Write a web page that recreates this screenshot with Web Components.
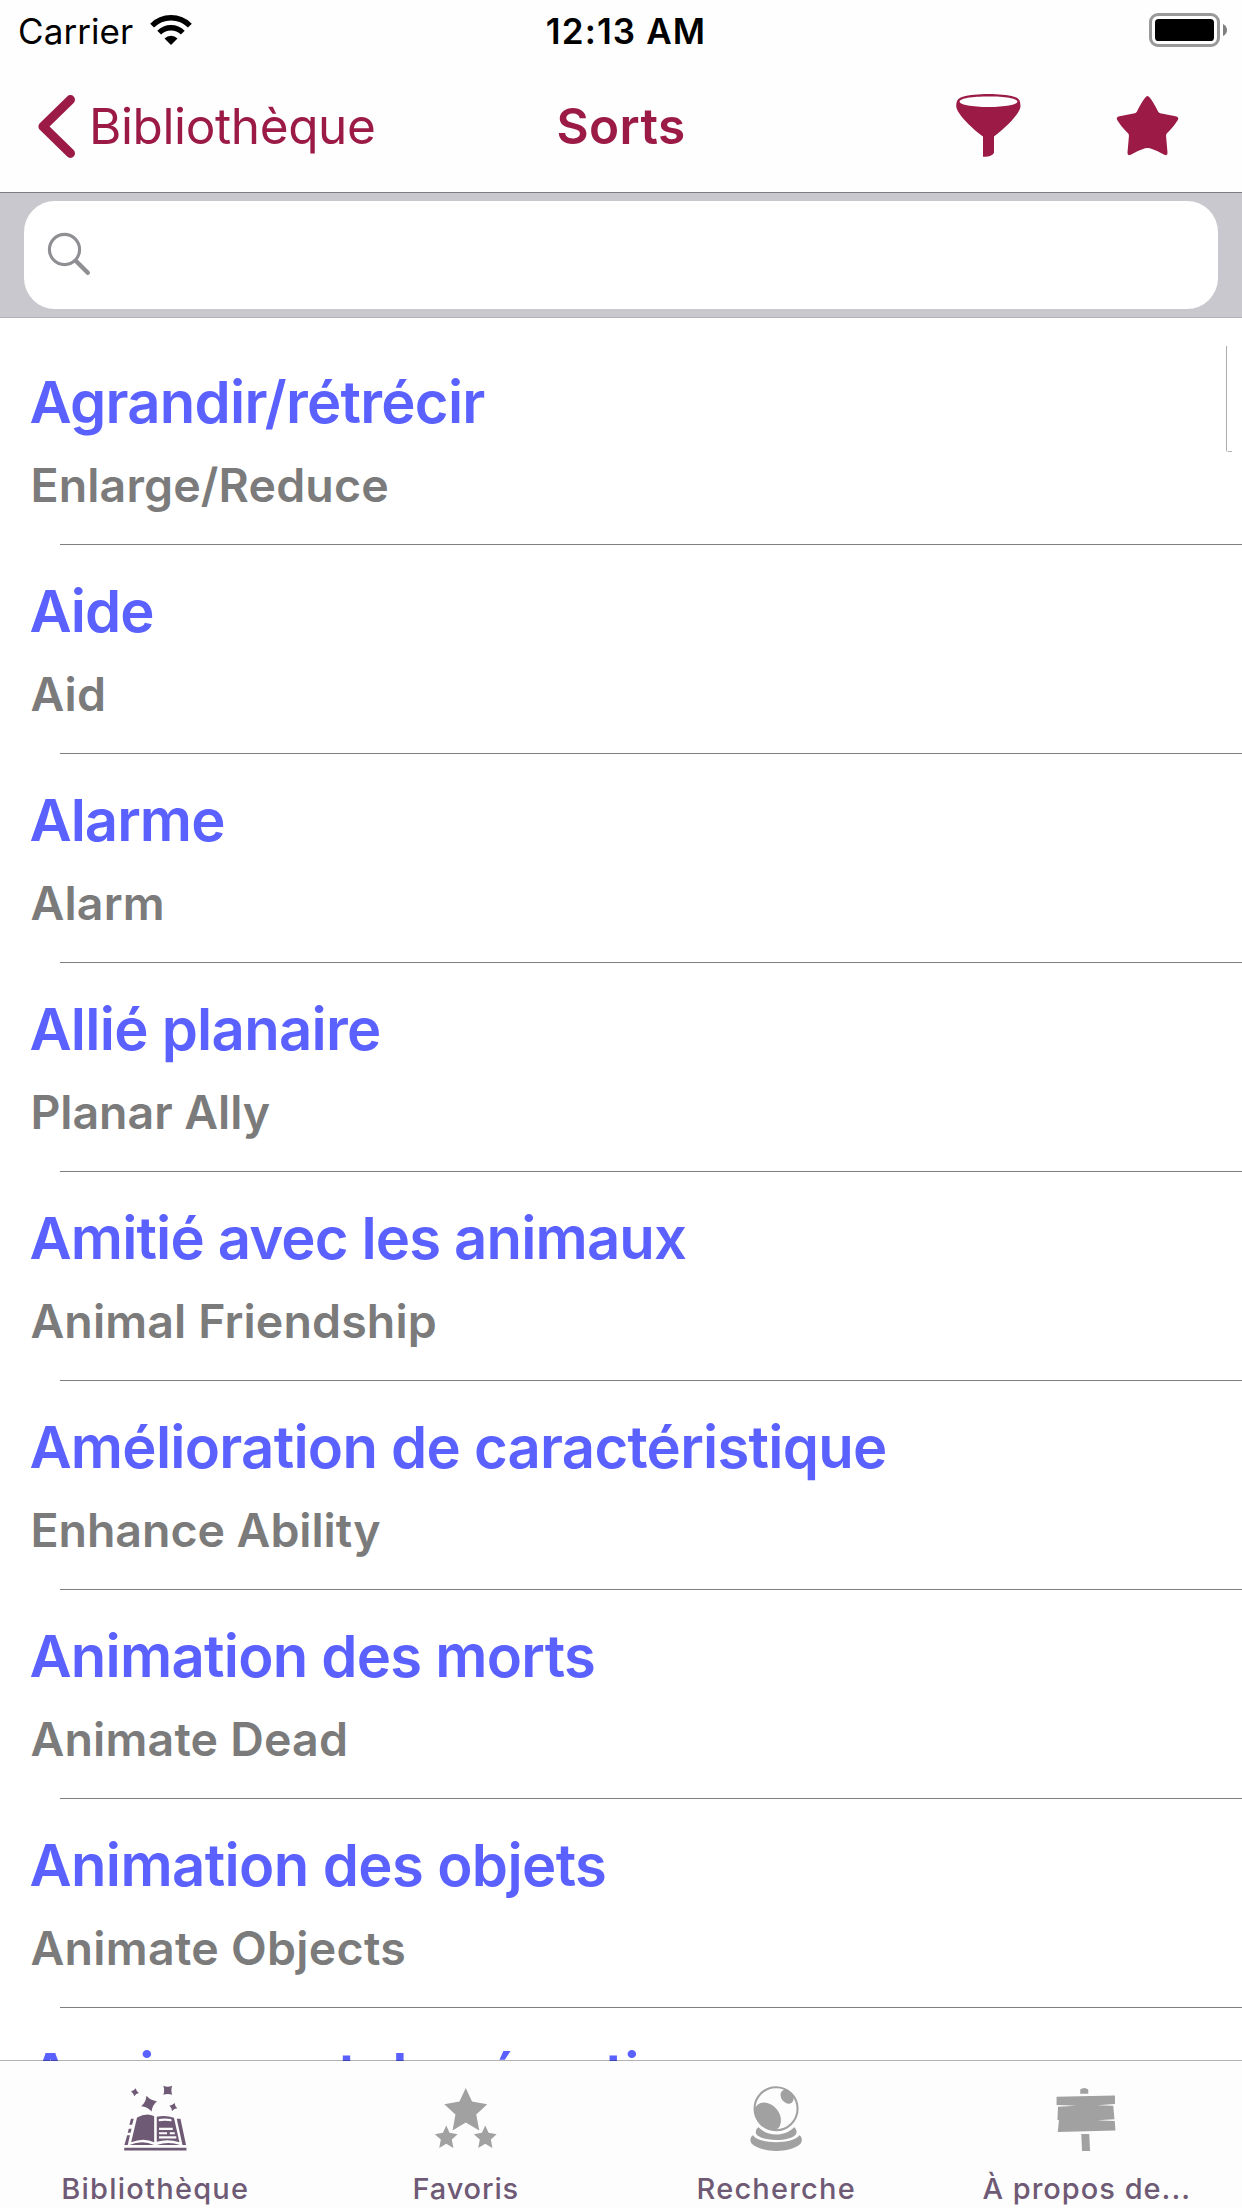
<!DOCTYPE html>
<html lang="fr">
<head>
<meta charset="utf-8">
<title>Sorts</title>
<style>
html,body{margin:0;padding:0}
body{width:1242px;height:2208px;overflow:hidden;background:#fff;font-family:Inter,"Liberation Sans",sans-serif}
</style>
</head>
<body>
<spell-app></spell-app>
<script>
function define(name, html, setup) {
  const tpl = document.createElement('template');
  tpl.innerHTML = html;
  customElements.define(name, class extends HTMLElement {
    constructor() {
      super();
      this.attachShadow({ mode: 'open' }).appendChild(tpl.content.cloneNode(true));
    }
    connectedCallback() { if (setup) setup(this, this.shadowRoot); }
  });
}

const STAR = 'M465.5 2088 471.8 2101.6 487 2104.3 476 2114.6 479 2130.5 465.5 2122.6 452.3 2130.5 455.2 2114.6 444 2104.3 459.2 2101.6Z';
const SPARK = 'M0-1Q.28-.3 1 0 .3.28 0 1-.28.3-1 0-.3-.28 0-1Z';

const ICONS = {
  wifi: ['149 13 44 34', `<g fill="none" stroke="currentColor" stroke-width="5.4"><path d="M152.1 25.6A26.7 26.7 0 0 1 189.9 25.6M159.2 32.7A16.7 16.7 0 0 1 182.8 32.7"/></g><path fill="currentColor" d="M171 44.9 164.5 38.4A9.2 9.2 0 0 1 177.5 38.4Z"/>`],
  battery: ['1147 11 82 38', `<rect x="1150.5" y="14.5" width="68" height="31" rx="7.5" fill="none" stroke="#999" stroke-width="3"/><rect x="1155" y="19" width="59" height="22" rx="3.6"/><path fill="#808080" d="M1223 24Q1227 26 1227 30T1223 36Z"/>`],
  back: ['36 92 42 68', `<path fill="none" stroke="currentColor" stroke-width="9.2" stroke-linecap="round" stroke-linejoin="round" d="M70.4 99.7 43 126.5 70.4 153.3"/>`],
  funnel: ['954 90 70 70', `<path fill="currentColor" fill-rule="evenodd" d="M956.2 106C956.5 100 958 98.3 963 96.8 975 93.2 1002 93.2 1014 96.8 1019 98.3 1020.3 100 1020.5 106 1020.5 112.5 1008 126 994 136.6V152.5C993 155.5 989 156.8 983 156.7V136.6C969 126 956.2 112.500 956.2 106ZM959.6 101.600C959.6 104.8 972 107.1 988.500 107.1S1017.4 104.800 1017.4 101.600 1005 96.500 988.500 96.500 959.600 98.400 959.6 101.600Z"/>`],
  star: ['1113 90 70 70', `<path fill="currentColor" d="M1145.3 97.5Q1147.500 94.500 1149.700 97.500C1152.500 101 1155 105.500 1157.800 111 1158.500 112.700 1159.500 113.200 1161.500 113.600L1175.500 116.200Q1179.500 117.200 1177.800 120C1175 124.500 1172 128.500 1167 133.200 1166.100 134.200 1166 135 1166.100 136.500L1167.500 152.500Q1167.700 156.200 1164.300 154.700 1158 151 1150 148.300 1147.500 147.500 1145 148.300 1137 151 1130.700 154.700 1127.300 156.200 1127.500 152.500L1128.900 136.500C1129 135 1128.900 134.200 1128 133.200 1123 128.500 1120 124.500 1117.200 120Q1115.500 117.200 1119.500 116.200L1133.500 113.600C1135.500 113.200 1136.500 112.700 1137.200 111 1140 105.500 1142.500 101 1145.300 97.500Z"/>`],
  search: ['44 229 50 50', `<g fill="none" stroke="currentColor"><circle cx="64.5" cy="249.500" r="15.100" stroke-width="3.100"/><path stroke-width="4.400" stroke-linecap="round" d="M76 261 87.800 272.800"/></g>`],
  book: ['118.25 2082 74 74', `<g fill="currentColor">
    <path transform="translate(135.200 2092.200) rotate(10) scale(4)" d="${SPARK}"/>
    <path transform="translate(149.300 2103.700) rotate(-18) scale(8.300)" d="${SPARK}"/>
    <path transform="translate(168 2090.300) rotate(45) scale(6.400)" d="${SPARK}"/>
    <path transform="translate(173.600 2107) rotate(18) scale(4.100)" d="${SPARK}"/>
    <path d="M124.500 2147.800H186.700V2150.600H124.500ZM137.300 2117.600Q147 2112 154.400 2116.200V2142.300Q144 2137 131.400 2142.300ZM157 2116.700Q166 2114.700 174.200 2117.700L179.700 2142.300Q168 2138.300 157 2141.800ZM129.500 2145Q143 2139.500 154.300 2145ZM157 2145Q169 2140.800 180.300 2145ZM131.200 2118.800H134L132.400 2124.700H129.600ZM129 2128.800H131.800L130.800 2132.700H128ZM127.400 2135.300H130.200L128 2145H124.700ZM177 2118.800H180.700L186.300 2145H182.700Z"/></g>
    <path fill="#fdfdfd" d="M159 2119Q165 2117.800 171.300 2119L172 2121.200Q165 2120.200 159 2121.200ZM159.300 2127.800H173V2130H159.300ZM159.300 2132.200H167.300V2134.300H159.300ZM170 2132.200H175V2134.300H170ZM159.300 2136.300H176.500V2138.600H159.300Z"/>`],
  stars: ['428.75 2082 74 74', `<path fill="currentColor" d="${STAR}"/><g fill="currentColor" stroke="#fdfdfd" stroke-width="2" paint-order="stroke"><path transform="translate(446 2125.500) scale(.53) translate(-465.500 -2088)" d="${STAR}"/><path transform="translate(485 2125.500) scale(.53) translate(-465.500 -2088)" d="${STAR}"/></g>`],
  orb: ['739.25 2082 74 74', `<defs><clipPath id="c"><circle cx="776.300" cy="2108.700" r="22"/></clipPath></defs><circle cx="776.300" cy="2108.700" r="21.500" fill="none" stroke="currentColor" stroke-width="2.100"/><g fill="currentColor"><g clip-path="url(#c)"><ellipse cx="767.500" cy="2117" rx="12.300" ry="15.700" transform="rotate(-38 767.500 2117)"/><ellipse cx="787.300" cy="2096.800" rx="5.800" ry="7.600" transform="rotate(-38 787.300 2096.800)"/></g><path d="M758.800 2127.300C768 2137 785 2137 794.300 2127.300 796.500 2128.500 797.300 2131.500 796.400 2134 791 2142 762 2142 756.400 2134 755.500 2131.500 756.500 2128.500 758.800 2127.300ZM753.300 2135.200C759 2144.500 793.500 2144.500 799.500 2135.200 802.500 2136.500 803 2141.500 800.500 2144 790 2153.300 763 2153.300 752.300 2144 750 2141.500 750 2137 753.300 2135.200Z"/></g>`],
  sign: ['1049.75 2082 74 74', `<path fill="currentColor" d="M1080 2093.700V2089.500Q1084 2086.500 1088 2089.500V2093.700ZM1056.300 2096.800 1114.700 2095.500V2104.100L1097 2105.200 1113 2105.800 1114.200 2119.200 1097 2120.300 1114.500 2121 1115.200 2130.500 1057.500 2131.900 1058.700 2120.300 1057.200 2120 1057.700 2106.800 1076 2105.700 1056.300 2105.100ZM1081 2134H1089L1089.800 2151H1081.800Z"/>`]
};

define('ui-icon', `<style>:host{display:block;flex:none}svg{display:block}</style>`, (host, root) => {
  const [box, art] = ICONS[host.getAttribute('name')];
  const [, , w, h] = box.split(' ');
  root.innerHTML += `<svg viewBox="${box}" width="${w}" height="${h}">${art}</svg>`;
});

define('status-bar', `<style>
:host{display:grid;grid-template-columns:1fr auto 1fr;align-items:center;height:63px;font-size:35px;line-height:42px;color:#000}
.l{display:flex;align-items:center;padding-left:18px;gap:16px;letter-spacing:.08px}
.l span{margin-top:-2px}
.l ui-icon{margin-top:-3px}
.t{font-weight:600;letter-spacing:1.13px;padding-left:10px;margin-top:-2px}
.r{display:flex;justify-content:flex-end;padding:0 13px 3px 0}
</style><div class="l"><span>Carrier</span><ui-icon name="wifi"></ui-icon></div><div class="t">12:13 AM</div><div class="r"><ui-icon name="battery"></ui-icon></div>`);

define('nav-bar', `<style>
:host{display:grid;grid-template-columns:1fr auto 1fr;align-items:center;height:129px;padding-bottom:3px;box-sizing:border-box;color:#9b1b46;font-size:49.5px;line-height:60px}
.l{display:flex;align-items:center;padding-left:36px;gap:11px;letter-spacing:-.39px}
.t{font-weight:600;letter-spacing:.39px}
.r{display:flex;justify-content:flex-end;gap:89px;padding-right:59px}
.r ui-icon{margin-top:-2px}
</style><div class="l"><ui-icon name="back"></ui-icon><span>Bibliothèque</span></div><div class="t"><slot></slot></div><div class="r"><ui-icon name="funnel"></ui-icon><ui-icon name="star"></ui-icon></div>`);

define('search-bar', `<style>
:host{display:block;box-sizing:border-box;height:126px;padding:8px 24px;background:#c9c8ce;border-top:1px solid #7f7f82;border-bottom:1px solid #b2b1b6}
.f{box-sizing:border-box;height:108px;border-radius:31px;background:#fff;padding:28px 20px;color:#8e8e93}
</style><div class="f"><ui-icon name="search"></ui-icon></div>`);

define('spell-row', `<style>
:host{display:flex;flex-direction:column;height:209px;box-sizing:border-box;padding-top:34px;font-weight:600;white-space:nowrap}
.n{font-size:58px;line-height:64px;color:#5b61ff;padding-left:29.4px}
.e{font-size:46.5px;line-height:56px;color:#7b7b7b;padding-left:30.4px;margin-top:23px}
.s{height:1px;background:#7f7f7f;margin:auto 0 0 60px}
</style><div class="n"><slot></slot></div><div class="e"><slot name="en"></slot></div><div class="s"></div>`, (host, root) => {
  root.querySelector('.n').style.letterSpacing = host.getAttribute('track') + 'px';
  root.querySelector('.e').style.letterSpacing = host.getAttribute('subtrack') + 'px';
});

define('spell-list', `<style>
:host{display:block;position:relative;height:1743px;box-sizing:border-box;padding-top:18px;overflow:hidden;background:#fff}
.bar{position:absolute;left:1226px;top:28px;width:5px;height:106px;box-sizing:border-box;border-left:1px solid #ababab;border-bottom-left-radius:2px}
.bar::after{content:"";position:absolute;left:1px;bottom:0;width:4px;height:1px;background:#b5b5b5}
</style><slot></slot><div class="bar"></div>`);

define('tab-item', `<style>
:host{display:flex;flex-direction:column;align-items:center;gap:14px;flex:1;padding-top:21px;color:#a1a1a1}
:host([active]){color:#6f5a75}
.t{font-size:29px;line-height:38px;font-weight:450;color:#6f5a75;white-space:nowrap}
</style><div class="i"></div><div class="t"><slot></slot></div>`, (host, root) => {
  root.querySelector('.i').innerHTML = `<ui-icon name="${host.getAttribute('icon')}"></ui-icon>`;
  root.querySelector('.t').style.letterSpacing = host.getAttribute('track') + 'px';
});

define('tab-bar', `<style>
:host{display:flex;position:relative;margin-top:-1px;height:148px;box-sizing:border-box;border-top:1px solid rgba(0,0,0,.3);background:#fdfdfd;background-clip:padding-box}
</style><slot></slot>`);

define('spell-app', `<style>
:host{display:flex;flex-direction:column;width:1242px;height:2208px;background:#fefefe}
</style>
<status-bar></status-bar>
<nav-bar>Sorts</nav-bar>
<search-bar></search-bar>
<spell-list>
<spell-row track="-.75" subtrack=".14">Agrandir/rétrécir<span slot="en">Enlarge/Reduce</span></spell-row>
<spell-row track="-1" subtrack=".17">Aide<span slot="en">Aid</span></spell-row>
<spell-row track="-.95" subtrack=".2">Alarme<span slot="en">Alarm</span></spell-row>
<spell-row track="-.73" subtrack="-.05">Allié planaire<span slot="en">Planar Ally</span></spell-row>
<spell-row track="-.84" subtrack=".12">Amitié avec les animaux<span slot="en">Animal Friendship</span></spell-row>
<spell-row track="-.74" subtrack="-.04">Amélioration de caractéristique<span slot="en">Enhance Ability</span></spell-row>
<spell-row track="-.75" subtrack=".2">Animation des morts<span slot="en">Animate Dead</span></spell-row>
<spell-row track="-.62" subtrack=".3">Animation des objets<span slot="en">Animate Objects</span></spell-row>
<spell-row track="-.8" subtrack="0">Apaisement des émotions</spell-row>
</spell-list>
<tab-bar>
<tab-item icon="book" track="1.25" active>Bibliothèque</tab-item>
<tab-item icon="stars" track=".85">Favoris</tab-item>
<tab-item icon="orb" track="1.2">Recherche</tab-item>
<tab-item icon="sign" track="1">À propos de...</tab-item>
</tab-bar>`);
</script>
</body>
</html>
